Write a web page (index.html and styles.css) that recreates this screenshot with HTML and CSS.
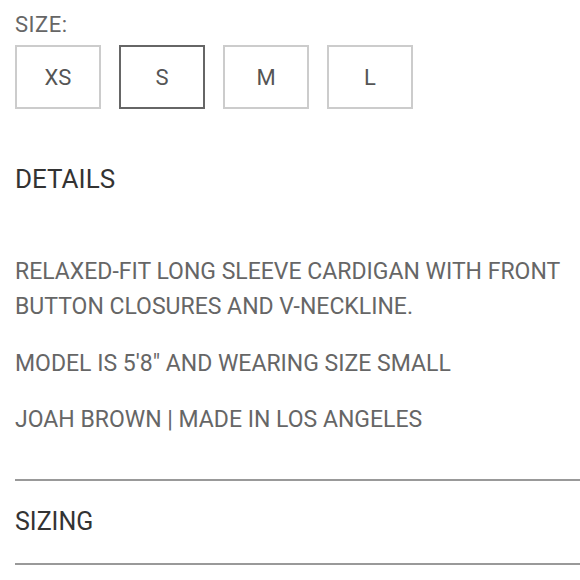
FILE: index.html
```html
<!DOCTYPE html>
<html>
<head>
<meta charset="utf-8">
<link rel="stylesheet" href="styles.css">
</head>
<body>
<div class="page">
  <div class="size-label">SIZE:</div>
  <div class="sizes">
    <div class="size">XS</div>
    <div class="size selected">S</div>
    <div class="size">M</div>
    <div class="size">L</div>
  </div>
  <div class="heading details">DETAILS</div>
  <p class="para first">RELAXED-FIT LONG SLEEVE CARDIGAN WITH FRONT BUTTON CLOSURES AND V-NECKLINE.</p>
  <p class="para">MODEL IS 5'8" AND WEARING SIZE SMALL</p>
  <p class="para">JOAH BROWN | MADE IN LOS ANGELES</p>
  <div class="accordion">SIZING</div>
</div>
</body>
</html>
```
FILE: styles.css
```css
html, body {
  margin: 0;
  padding: 0;
  background: #fff;
}
.page {
  padding-left: 15px;
  font-family: Roboto, "Liberation Sans", sans-serif;
}
.size-label {
  margin-top: 10px;
  height: 30px;
  line-height: 30px;
  font-size: 22px;
  color: #666;
  letter-spacing: 0.5px;
}
.sizes {
  display: flex;
  gap: 18px;
  margin-top: 5px;
}
.size {
  box-sizing: border-box;
  width: 86px;
  height: 64px;
  border: 2px solid #ccc;
  display: flex;
  align-items: center;
  justify-content: center;
  font-size: 22px;
  color: #555;
}
.size.selected {
  border-color: #666;
}
.heading {
  font-size: 26px;
  color: #333;
  line-height: 40px;
  height: 40px;
}
.details {
  margin-top: 50px;
}
.para {
  margin: 21.5px 0 0;
  font-size: 23px;
  line-height: 35px;
  color: #666;
  letter-spacing: 0;
  padding-right: 10px;
}
.para.first {
  margin-top: 55px;
}
.accordion {
  margin-top: 41.5px;
  border-top: 2px solid #999;
  border-bottom: 2px solid #999;
  height: 82px;
  line-height: 82px;
  font-size: 25px;
  color: #333;
}
```
